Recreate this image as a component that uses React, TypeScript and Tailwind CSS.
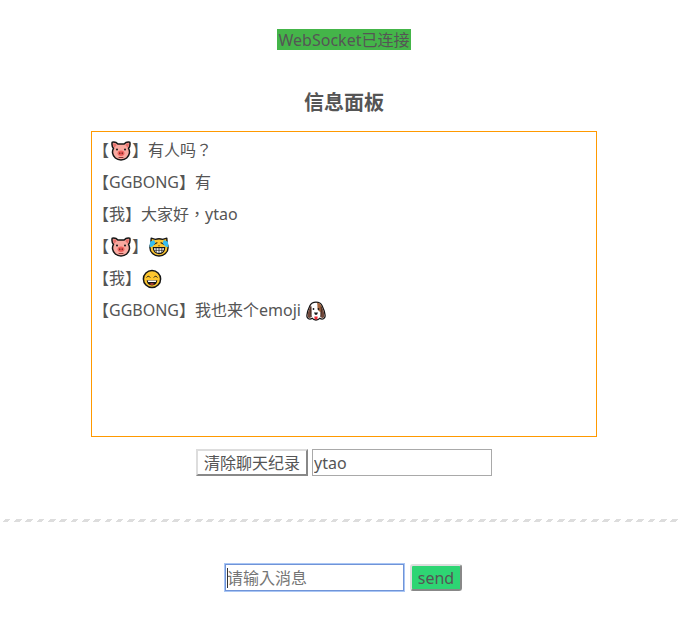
import { useState } from "react";
import type { FormEvent, ReactNode } from "react";

const PigFace = () => (
  <svg role="img" aria-label="pig" viewBox="0 0 20 20" className="ml-0.5 mr-px inline-block size-5 align-[-5px]">
    <path
      d="M1.2 1.2C3.6.6 5.6 1.5 6.9 3h6.2c1.300-1.500 3.300-2.400 5.700-1.800.6 2.600 0 4.700-1.300 6.200.9 1.500 1.200 3 .9 4.800-.6 3.800-3.900 6.800-8.400 6.800s-7.800-3-8.400-6.800c-.3-1.800 0-3.300.9-4.800C1.200 5.900.6 3.800 1.200 1.200Z"
      fill="#f9a9a0"
      stroke="#161616"
      strokeWidth="1.500"
      strokeLinejoin="round"
    />
    <path d="M2.300 2.200c1.700 0 2.800.8 3.500 1.900L3.200 6.700c-.9-1.300-1.200-2.800-.9-4.500ZM17.700 2.200c-1.700 0-2.800.8-3.500 1.900l2.600 2.600c.9-1.300 1.200-2.800.9-4.500Z" fill="#e66f6a" />
    <circle cx="6" cy="8.600" r="1" fill="#161616" />
    <circle cx="14" cy="8.600" r="1" fill="#161616" />
    <ellipse cx="10" cy="12.200" rx="3.400" ry="2.700" fill="#f0605c" />
    <ellipse cx="8.800" cy="12.200" rx=".6" ry="1" fill="#5a1515" />
    <ellipse cx="11.200" cy="12.200" rx=".6" ry="1" fill="#5a1515" />
    <path d="M8 16.500h4" stroke="#7b2a2a" strokeWidth=".9" strokeLinecap="round" />
  </svg>
);

const CatJoy = () => (
  <svg role="img" aria-label="cat with tears of joy" viewBox="0 0 20 20" className="mx-px inline-block size-5 align-[-5px]">
    <path
      d="M2.200 1.200 6.400 2.400c2.300-.9 4.900-.9 7.200 0l4.200-1.200.4 5.600c.6 1.200.9 2.400.9 3.700 0 4.900-4 8.500-9.100 8.500S.9 15.400.9 10.500c0-1.300.3-2.500.9-3.700l.4-5.600Z"
      fill="#fdc62f"
      stroke="#161616"
      strokeWidth="1.400"
      strokeLinejoin="round"
    />
    <path d="M4.600 7.400 8 5.800M15.400 7.400 12 5.800" stroke="#161616" strokeWidth="1.100" strokeLinecap="round" />
    <path d="M1 4.800 5.200 3l1.200 3.200L3.600 9.400.6 10.200ZM19 4.800 14.800 3l-1.200 3.200 2.800 3.200 3 .8Z" fill="#35bdf0" />
    <path d="M9 8.400h2l-1 1.100Z" fill="#161616" />
    <path d="M4.300 10.600h11.400c0 3.600-2.300 6-5.700 6s-5.700-2.400-5.700-6Z" fill="#fff" stroke="#161616" strokeWidth="1.100" />
    <path d="M5 13.300h10M7.200 10.600v5M10 10.600v6M12.800 10.600v5" stroke="#161616" strokeWidth=".7" />
  </svg>
);

const SmileFace = () => (
  <svg role="img" aria-label="smile" viewBox="0 0 20 20" className="mx-px inline-block size-5 align-[-5px]">
    <circle cx="10" cy="10" r="8.600" fill="#fdc62f" stroke="#161616" strokeWidth="1.500" />
    <path d="M4.800 8.200c.7-1.300 2.500-1.300 3.200 0M12 8.200c.7-1.300 2.500-1.300 3.200 0" fill="none" stroke="#161616" strokeWidth="1" strokeLinecap="round" />
    <path d="M4.700 11.200h10.600c-.2 3.100-2.200 5.200-5.300 5.200s-5.100-2.100-5.300-5.200Z" fill="#161616" />
    <path d="M5.700 11.400h8.600l-.5 1.500H6.200Z" fill="#fff" />
    <path d="M7.600 15.100c1.300-1 3.500-1 4.800 0-1.300.9-3.500.9-4.800 0Z" fill="#ef4b3f" />
  </svg>
);

const DogFace = () => (
  <svg role="img" aria-label="dog" viewBox="0 0 20 20" className="mx-px inline-block size-5 align-[-5px]">
    <path
      d="M10 1.200c3 0 5 1.300 6.100 3.600 1.400 2.900 2.700 6.200 3 9.400.2 2.200-1 3.900-2.900 3.900-.9 0-1.700-.3-2.300-.9-.9 1.200-2.200 1.800-3.900 1.800s-3-.6-3.900-1.800c-.6.6-1.400.9-2.300.9-1.900 0-3.100-1.700-2.900-3.900.3-3.200 1.600-6.500 3-9.400C5 2.500 7 1.200 10 1.200Z"
      fill="#fff"
      stroke="#161616"
      strokeWidth="1.300"
      strokeLinejoin="round"
    />
    <path d="M5 4.300c.8 3.500.8 8.300-.1 12.300-2.200 1.200-3.500-.4-3.300-2.700.3-3.200 1.700-6.800 3.400-9.600ZM15 4.300c-.8 3.500-.8 8.300.1 12.300 2.200 1.200 3.500-.4 3.300-2.700-.3-3.200-1.700-6.800-3.400-9.600Z" fill="#71483a" />
    <path d="M11 1.800c2.100.1 3.600 1.300 4.300 3.100-.4 2-.3 4-.3 6.100-2 .1-3.300-1.500-3.500-3.900-.1-1.900 0-3.700-.5-5.300Z" fill="#a4653d" />
    <path d="M5 5.500c-.5 3.500-.2 7 .5 10.500M15 5.500c.5 3.500.2 7-.5 10.500" fill="none" stroke="#2b1a14" strokeWidth=".7" />
    <circle cx="7.500" cy="8" r=".9" fill="#161616" />
    <circle cx="12.500" cy="8" r=".9" fill="#161616" />
    <path d="M8 11.500h4l-1 2.200H9Z" fill="#161616" />
    <path d="M8.400 15.600h3.200v1.300c0 2.200-3.200 2.200-3.200 0Z" fill="#ee2b35" />
  </svg>
);

const messages: { from: ReactNode; body: ReactNode }[] = [
  { from: <PigFace />, body: "有人吗？" },
  { from: "GGBONG", body: "有" },
  { from: "我", body: "大家好，ytao" },
  { from: <PigFace />, body: <CatJoy /> },
  { from: "我", body: <SmileFace /> },
  { from: "GGBONG", body: <>我也来个emoji <DogFace /></> },
];

export default function App() {
  const [log, setLog] = useState(messages);
  const [name, setName] = useState("ytao");
  const [text, setText] = useState("");

  const send = (e: FormEvent) => {
    e.preventDefault();
    if (!text) return;
    setLog([...log, { from: "我", body: text }]);
    setText("");
  };

  return (
    <main className="bg-white pb-8 pt-[29px] font-['Noto_Sans','Noto_Sans_CJK_TC','Noto_Sans_CJK_SC',sans-serif] text-base text-[#555]">
      <div className="flex flex-col items-center pl-1.5">
        <p role="status" className="h-[21px] bg-[#44b549] px-0.5 leading-[23px]">
          WebSocket已连接
        </p>
        <h1 className="mt-[39px] text-xl font-bold leading-7">信息面板</h1>
        <ul className="mt-[14px] h-[306px] w-full max-w-[506px] overflow-y-auto border border-[#ff9900] px-px py-0.5">
          {log.map((m, i) => (
            <li key={i} className="h-8 leading-8">
              【{m.from}】{m.body}
            </li>
          ))}
        </ul>
        <div className="mt-3 flex gap-1">
          <button
            type="button"
            onClick={() => setLog([])}
            className="h-[27px] w-28 border-2 border-t-[#ddd] border-r-[#888] border-b-[#888] border-l-[#ddd] bg-white leading-[22px]"
          >
            清除聊天纪录
          </button>
          <input
            aria-label="昵称"
            value={name}
            onChange={(e) => setName(e.target.value)}
            className="h-[27px] w-[180px] border border-[#a9a9a9] px-px outline-none"
          />
        </div>
      </div>

      <hr className="mr-px mt-[43px] h-[3px] border-0 bg-[repeating-linear-gradient(-45deg,#fff,#fff_4px,#ddd_4px,#ddd_8px)]" />

      <form onSubmit={send} className="mt-[42px] flex items-center justify-center gap-1.5 pl-[5px]">
        <div className="relative">
          <input
            aria-label="消息"
            placeholder="请输入消息"
            value={text}
            onChange={(e) => setText(e.target.value)}
            className="block h-[27px] w-[179px] border border-[#7094d8] px-px outline-1 outline-[#a9c6f5] placeholder:text-[#757575]"
          />
          <span className="absolute left-0.5 top-1 h-5 w-px bg-[#333]" />
        </div>
        <button
          type="submit"
          className="h-[27px] w-[52px] rounded-[3px] border-2 border-t-[#ddd] border-r-[#888] border-b-[#888] border-l-[#ddd] bg-[#2ed573] leading-[22px]"
        >
          send
        </button>
      </form>
    </main>
  );
}
